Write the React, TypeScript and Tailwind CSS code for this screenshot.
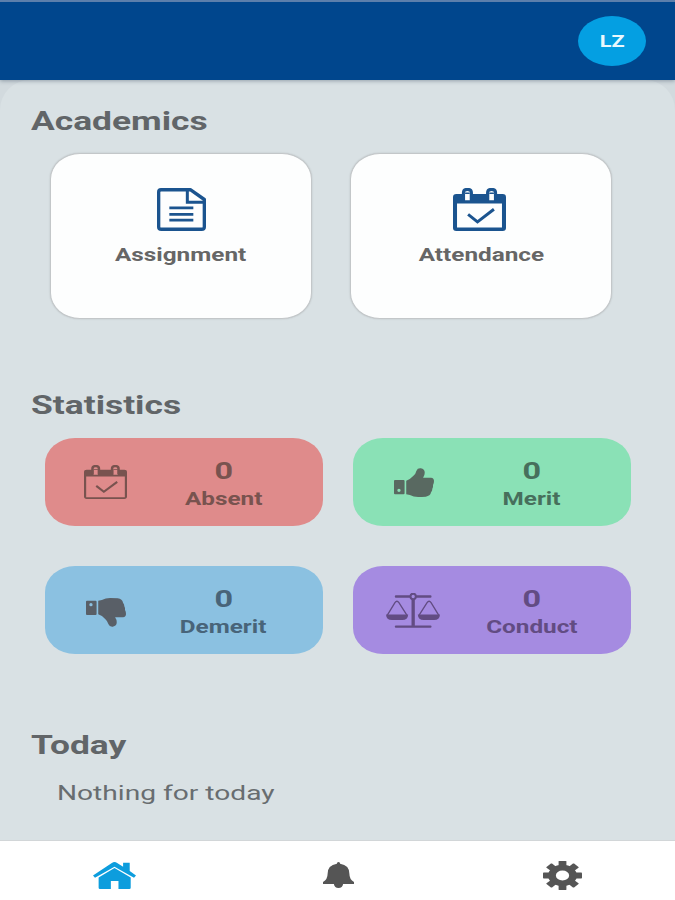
import type { ReactNode } from "react";
import clsx from "clsx";

interface IconProps {
  className?: string;
}

const AssignmentIcon = ({ className }: IconProps) => (
  <svg
    viewBox="0 0 147 127"
    preserveAspectRatio="none"
    fill="none"
    stroke="currentColor"
    className={className}
  >
    <path
      d="M12 5H100L142 34V115Q142 122 134 122H13Q5 122 5 115V12Q5 5 12 5Z"
      strokeWidth="10"
      strokeLinejoin="round"
    />
    <path d="M91 5V42H142" strokeWidth="9" />
    <path d="M37 59H109M37 78H109M37 95H109" strokeWidth="8" />
  </svg>
);

const CalendarIcon = ({ className, thin }: IconProps & { thin?: boolean }) => (
  <svg
    viewBox="0 0 158 127"
    preserveAspectRatio="none"
    fill="none"
    stroke="currentColor"
    className={className}
  >
    <path
      d={
        thin
          ? "M10 18H148Q158 18 158 27V118Q158 127 148 127H10Q0 127 0 118V27Q0 18 10 18ZM8 43V120H150V43ZM35 15V36H51V15ZM108 15V36H124V15Z"
          : "M10 18H148Q158 18 158 27V118Q158 127 148 127H10Q0 127 0 118V27Q0 18 10 18ZM12 46V117H146V46ZM36 13V36H50V13ZM108 13V36H122V13Z"
      }
      fill="currentColor"
      fillRule="evenodd"
      stroke="none"
    />
    <path
      d="M31 35V14Q31 4 43 4Q55 4 55 14V35M103 35V14Q103 4 115 4Q127 4 127 14V35"
      strokeWidth="9"
    />
    <path d="M45 78L73 100L122 63" strokeWidth={thin ? 8 : 9} />
  </svg>
);

const ThumbIcon = ({ className }: IconProps) => (
  <svg
    viewBox="0 0 121 87"
    preserveAspectRatio="none"
    fill="currentColor"
    className={className}
  >
    <path
      d="M3 36H29Q32 36 32 39V76Q32 79 29 79H3Q0 79 0 76V39Q0 36 3 36ZM15 62A5 5 0 1 0 15 72A5 5 0 1 0 15 62Z"
      fillRule="evenodd"
    />
    <path d="M37 38Q49 34 58 24Q66 17 68 8Q71 0 81 1Q93 3 93 14Q93 22 88 29H112Q121 30 121 39Q121 46 118 51Q119 57 116 62Q116 68 112 73Q110 84 96 86Q84 87 73 87Q59 87 48 81L37 79Z" />
  </svg>
);

const ScalesIcon = ({ className }: IconProps) => (
  <svg
    viewBox="0 0 163 101"
    preserveAspectRatio="none"
    fill="none"
    stroke="currentColor"
    className={className}
  >
    <path
      d="M30 10H72M92 10H134M30 97H134"
      strokeWidth="7"
      strokeLinecap="round"
    />
    <path d="M82 18V95" strokeWidth="10" />
    <circle cx="82" cy="10" r="8" strokeWidth="6" />
    <path
      d="M4 64L27 28Q33 20 39 28L63 64M100 64L124 28Q130 20 136 28L159 64"
      strokeWidth="4"
    />
    <path
      d="M0 62H67Q66 78 49 78H18Q1 78 0 62ZM96 62H163Q162 78 145 78H114Q97 78 96 62Z"
      fill="currentColor"
      stroke="none"
    />
  </svg>
);

const HomeIcon = ({ className }: IconProps) => (
  <svg
    viewBox="0 0 130 80"
    preserveAspectRatio="none"
    fill="currentColor"
    className={className}
  >
    <path d="M65 0Q69 0 73 3L91 14V2H111V27L130 40L124 47L65 14L6 47L0 40L57 3Q61 0 65 0Z" />
    <path d="M65 18L114 46V76Q114 80 110 80H77V56H54V80H21Q17 80 17 76V46Z" />
  </svg>
);

const BellIcon = ({ className }: IconProps) => (
  <svg
    viewBox="0 0 94 78"
    preserveAspectRatio="none"
    fill="currentColor"
    className={className}
  >
    <path d="M47 0Q52 0 52 5Q80 9 80 35Q80 52 94 60V66H61Q59 78 47 78Q35 78 33 66H0V60Q14 52 14 35Q14 9 42 5Q42 0 47 0Z" />
  </svg>
);

const GearIcon = ({ className }: IconProps) => (
  <svg
    viewBox="-50 -50 100 100"
    preserveAspectRatio="none"
    className={className}
  >
    <circle r="27" fill="none" stroke="currentColor" strokeWidth="20" />
    {[0, 45, 90, 135, 180, 225, 270, 315].map((angle) => (
      <rect
        key={angle}
        x="-10"
        y="-50"
        width="20"
        height="19"
        rx="2"
        fill="currentColor"
        transform={`rotate(${angle})`}
      />
    ))}
  </svg>
);

interface CardProps {
  label: ReactNode;
  icon: ReactNode;
}

const AcademicCard = ({ label, icon }: CardProps) => (
  <button className="flex h-[166px] w-[262px] flex-col items-center rounded-[30px/26px] border border-[#c3c7c9] bg-[#fdfefe] pt-[34px] shadow-[0_0_2px_rgba(0,0,0,0.15)]">
    {icon}
    <span className="mt-[13px] scale-x-[1.35] text-[18px] leading-[22px] font-bold text-[#666]">
      {label}
    </span>
  </button>
);

interface StatCardProps extends CardProps {
  value: number;
  color: string;
}

const StatCard = ({ label, icon, value, color }: StatCardProps) => (
  <div
    className={clsx(
      "flex h-[88px] w-[278px] rounded-[30px/26px] font-bold",
      color
    )}
  >
    <div className="flex w-[121px] items-center justify-center">{icon}</div>
    <div className="flex w-[115px] flex-col items-center pt-[18px]">
      <span className="scale-x-[1.35] text-[24px] leading-[30px]">{value}</span>
      <span className="scale-x-[1.35] text-[18px] leading-[26px] whitespace-nowrap">
        {label}
      </span>
    </div>
  </div>
);

const SectionTitle = ({ children }: { children: ReactNode }) => (
  <h2 className="w-fit origin-left scale-x-[1.36] text-[26px] leading-8 font-bold text-[#616568]">
    {children}
  </h2>
);

export default function App() {
  return (
    <div className="flex h-[900px] w-[675px] flex-col overflow-hidden bg-[#d2dade] font-['Roboto',sans-serif]">
      <header className="z-10 flex h-20 shrink-0 items-center justify-end border-t-2 border-[#5c7fac] bg-[#00468d] pr-[29px] shadow-[0_1px_4px_rgba(60,80,100,0.45)]">
        <div className="flex h-[50px] w-[68px] items-center justify-center rounded-[50%] bg-[#049fe2]">
          <span className="scale-x-[1.35] pt-0.5 text-[16px] font-bold text-[#e9f8fd]">
            LZ
          </span>
        </div>
      </header>

      <main className="flex h-[760px] shrink-0 flex-col rounded-t-[30px] bg-[#d9e1e4] pt-[25px] pl-[31px]">
        <SectionTitle>Academics</SectionTitle>
        <div className="mt-4 ml-[19px] flex gap-[38px]">
          <AcademicCard
            label="Assignment"
            icon={
              <AssignmentIcon className="h-[43px] w-[49px] text-[#1b548f]" />
            }
          />
          <AcademicCard
            label="Attendance"
            icon={
              <CalendarIcon className="mr-1 h-[43px] w-[53px] text-[#1b548f]" />
            }
          />
        </div>

        <div className="mt-[70px]">
          <SectionTitle>Statistics</SectionTitle>
        </div>
        <div className="mt-[17px] ml-[14px] grid w-fit grid-cols-2 gap-x-[30px] gap-y-10">
          <StatCard
            label="Absent"
            value={0}
            color="bg-[#df8b8b] text-[#78534f]"
            icon={<CalendarIcon thin className="h-[34px] w-[43px]" />}
          />
          <StatCard
            label="Merit"
            value={0}
            color="bg-[#8ae1b6] text-[#476f5c]"
            icon={<ThumbIcon className="h-[29px] w-10 text-[#596961]" />}
          />
          <StatCard
            label="Demerit"
            value={0}
            color="bg-[#8bc1e1] text-[#486479]"
            icon={
              <ThumbIcon className="mt-1 h-[29px] w-10 -scale-y-100 text-[#595f67]" />
            }
          />
          <StatCard
            label="Conduct"
            value={0}
            color="bg-[#a58be1] text-[#624c83]"
            icon={<ScalesIcon className="mr-0.5 h-[35px] w-[54px]" />}
          />
        </div>

        <div className="mt-[75px]">
          <SectionTitle>Today</SectionTitle>
        </div>
        <p className="mt-[18px] ml-[26px] w-fit origin-left scale-x-[1.34] text-[21px] leading-7 text-[#686d70]">
          Nothing for today
        </p>
      </main>

      <nav className="grid h-[60px] shrink-0 grid-cols-3 items-center justify-items-center border-t border-[#d2d6d8] bg-white pt-[9px] pl-0.5 text-[#555]">
        <HomeIcon className="h-[27px] w-[43px] text-[#0d9ddd]" />
        <BellIcon className="h-[26px] w-[31px]" />
        <GearIcon className="h-[29px] w-[39px]" />
      </nav>
    </div>
  );
}
